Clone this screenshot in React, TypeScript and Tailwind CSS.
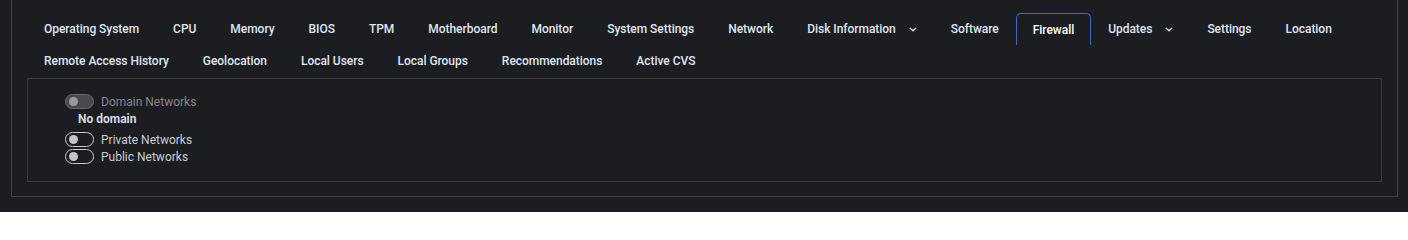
const tabsRowOne = [
  { label: "Operating System" },
  { label: "CPU" },
  { label: "Memory" },
  { label: "BIOS" },
  { label: "TPM" },
  { label: "Motherboard" },
  { label: "Monitor" },
  { label: "System Settings" },
  { label: "Network" },
  { label: "Disk Information", dropdown: true },
  { label: "Software" },
  { label: "Firewall", active: true },
  { label: "Updates", dropdown: true },
  { label: "Settings" },
  { label: "Location" },
];

const tabsRowTwo = [
  { label: "Remote Access History" },
  { label: "Geolocation" },
  { label: "Local Users" },
  { label: "Local Groups" },
  { label: "Recommendations" },
  { label: "Active CVS" },
];

type Tab = { label: string; active?: boolean; dropdown?: boolean };

function Chevron() {
  return (
    <svg width="8" height="5" viewBox="0 0 8 5" className="ml-[13px]" fill="none">
      <path d="M1.2 1.2l2.8 2.6 2.8-2.6" stroke="#dfe6f2" strokeWidth="1.4" strokeLinecap="round" strokeLinejoin="round" />
    </svg>
  );
}

function TabItem({ tab }: { tab: Tab }) {
  return (
    <li
      className={
        tab.active
          ? "flex h-[32px] items-center rounded-t-[5px] border border-b-0 border-[#3d6ac4] px-4 text-white"
          : "flex h-[32px] items-center border border-transparent px-4 text-[#dfe6f2]"
      }
    >
      <span>{tab.label}</span>
      {tab.dropdown && <Chevron />}
    </li>
  );
}

function Toggle({ disabled }: { disabled?: boolean }) {
  return (
    <span
      className={
        disabled
          ? "flex h-[15px] w-[29px] items-center rounded-full border border-[#6a6a6e] bg-[#4a4a4d] pl-[3px]"
          : "flex h-[15px] w-[29px] items-center rounded-full border border-[#c9c9cc] bg-[#1c1d21] pl-[3px]"
      }
    >
      <span className={disabled ? "h-[9px] w-[9px] rounded-full bg-[#9b9b9f]" : "h-[9px] w-[9px] rounded-full bg-[#c4c4c7]"} />
    </span>
  );
}

export default function App() {
  return (
    <div className="min-h-[212px] bg-[#1c1d21] pl-[11px] pr-[10px] pb-[15px] font-['Roboto',sans-serif]">
      <div className="border border-t-0 border-[#404146] px-[15px] pt-[13px] pb-[14px]">
        <ul className="flex flex-wrap text-[12px] font-medium tracking-[-0.035px]">
          {tabsRowOne.map((tab) => (
            <TabItem key={tab.label} tab={tab} />
          ))}
        </ul>
        <ul className="flex flex-wrap text-[12px] font-medium tracking-[-0.035px]">
          {tabsRowTwo.map((tab) => (
            <TabItem key={tab.label} tab={tab} />
          ))}
        </ul>
        <div className="mt-px border border-[#3b3c41] pt-[15px] pb-4 pl-[37px] text-[12px]">
          <div className="flex h-[15px] items-center gap-[7px]">
            <Toggle disabled />
            <span className="text-[#86878b]">Domain Networks</span>
          </div>
          <p className="mt-[3px] h-[14px] pl-[13px] leading-[14px] font-bold text-[#d3dae6]">No domain</p>
          <div className="mt-[5px] flex h-[17px] items-center gap-[7px]">
            <Toggle />
            <span className="text-[#c9ccd2]">Private Networks</span>
          </div>
          <div className="flex h-[17px] items-center gap-[7px]">
            <Toggle />
            <span className="text-[#c9ccd2]">Public Networks</span>
          </div>
        </div>
      </div>
    </div>
  );
}
